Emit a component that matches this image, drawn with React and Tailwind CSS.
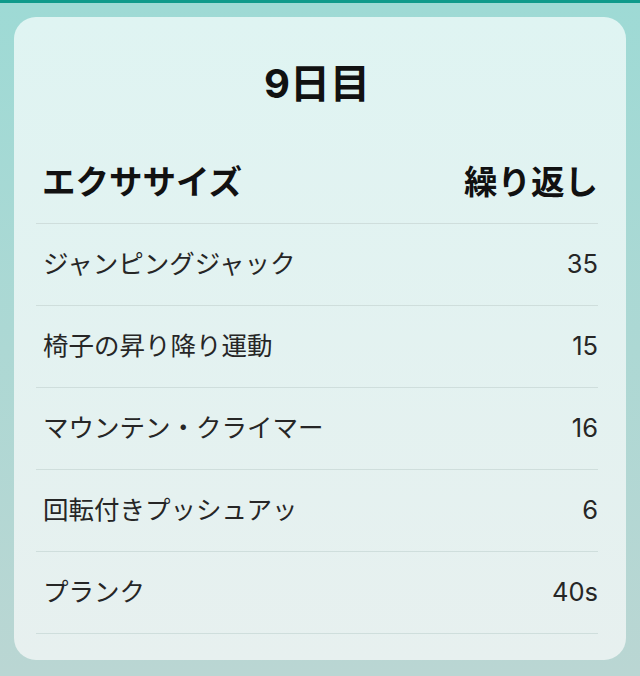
const rows = [
  { name: "ジャンピングジャック", reps: "35" },
  { name: "椅子の昇り降り運動", reps: "15" },
  { name: "マウンテン・クライマー", reps: "16" },
  { name: "回転付きプッシュアッ", reps: "6" },
  { name: "プランク", reps: "40s" },
];

export default function App() {
  return (
    <div
      className="h-[676px] w-[640px] overflow-hidden border-t-[3px] border-[#0f9a8b] bg-gradient-to-b from-[#9edad5] to-[#bad6d3] px-[14px] pt-[14px]"
      style={{ fontFamily: 'Inter, "Noto Sans CJK JP", sans-serif' }}
    >
      <div className="h-[643px] rounded-[22px] bg-gradient-to-b from-[#dff4f2] to-[#e7f0ef] pl-[22px] pr-[28px]">
        <h1 className="pt-[39px] text-center text-[40px] leading-[56px] font-bold text-[#111]">9日目</h1>

        <div className="mt-[50px] flex items-center justify-between border-b border-[#cfdedc] pb-[21px] pl-[6px] text-[33.5px] leading-[40px] font-bold text-[#111]">
          <span>エクササイズ</span>
          <span>繰り返し</span>
        </div>

        {rows.map((r) => (
          <div
            key={r.name}
            className="flex h-[82px] items-center justify-between border-b border-[#cfdedc] pl-[7px] text-[25.5px] text-[#262626]"
          >
            <span>{r.name}</span>
            <span>{r.reps}</span>
          </div>
        ))}
      </div>
    </div>
  );
}
